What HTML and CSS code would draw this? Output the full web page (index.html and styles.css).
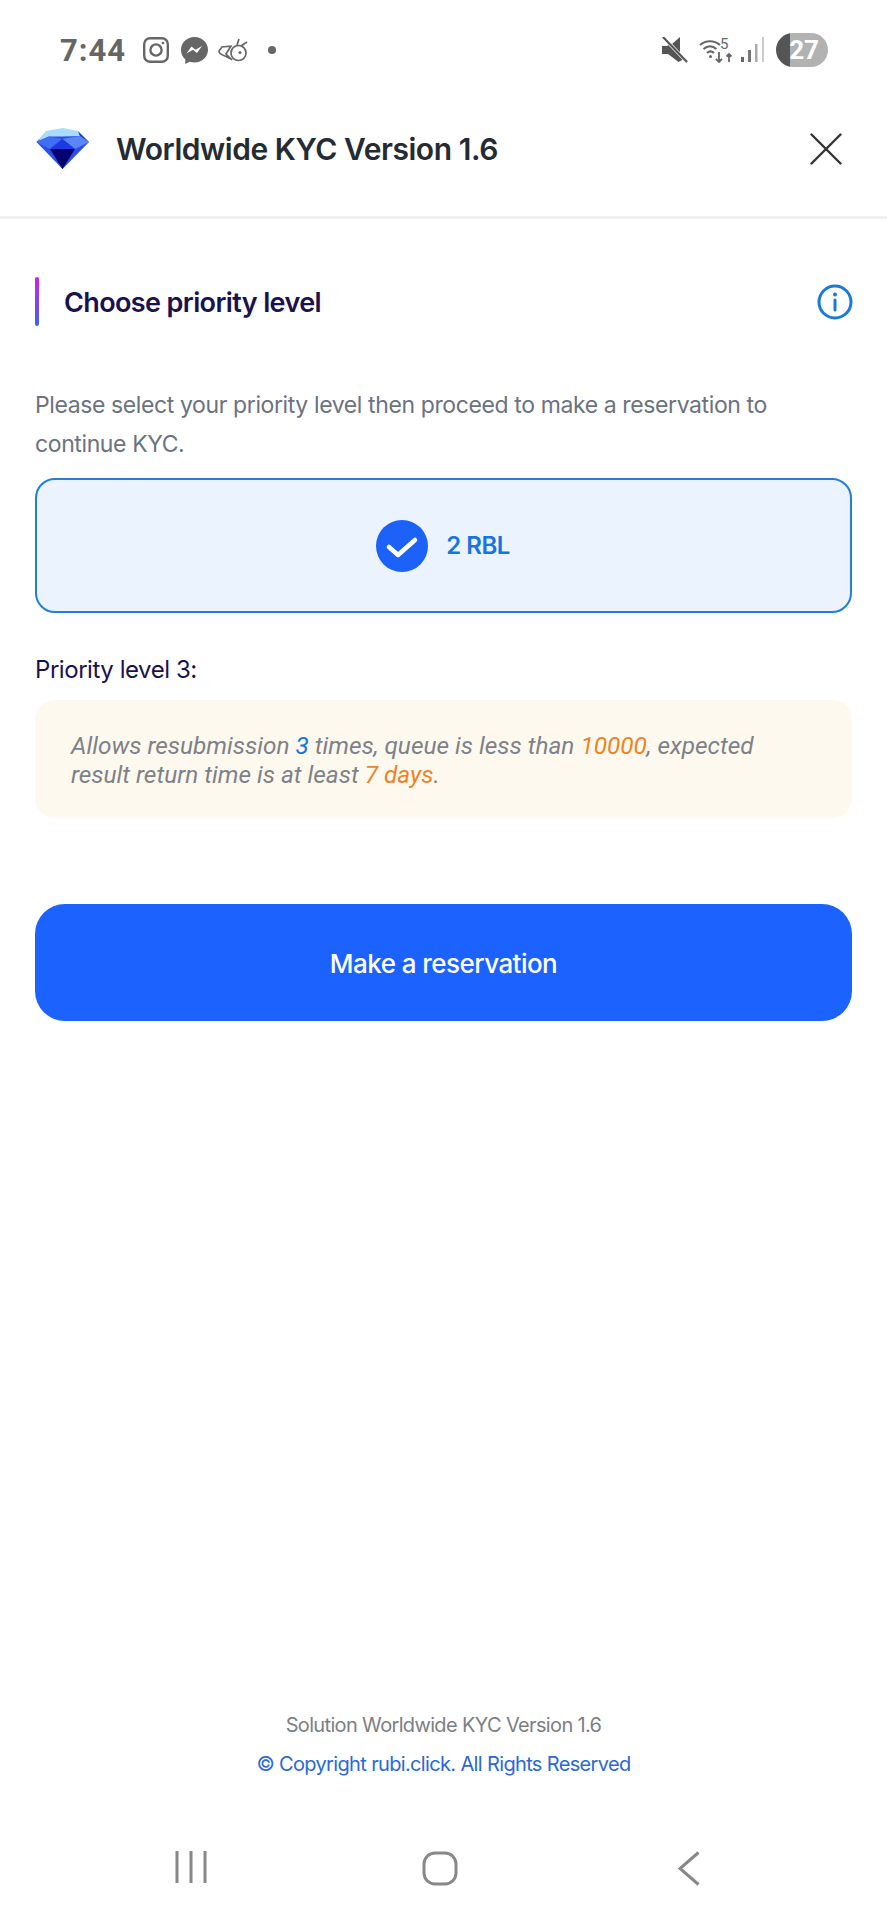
FILE: index.html
```html
<!DOCTYPE html>
<html>
<head lang="en">
    <meta charset="UTF-8">
    <title>Worldwide KYC Version 1.6</title>
    <link rel="stylesheet" href="styles.css">
</head>
<body>
<div class="page">
    <div class="status">
        <span class="time">7:44</span>
        <svg class="ic-insta" width="26" height="26" viewBox="0 0 26 26" fill="none" stroke="#666" stroke-width="2.4">
            <rect x="1.2" y="1.2" width="23.6" height="23.6" rx="6"/>
            <circle cx="13" cy="13" r="5.6"/>
            <circle cx="20" cy="6" r="1.3" fill="#666" stroke="none"/>
        </svg>
        <svg class="ic-msg" width="27" height="27" viewBox="0 0 27 27">
            <path d="M13.5 0C6 0 0 5.6 0 12.9c0 3.900 1.600 7.200 4.300 9.500V27l4.200-2.300c1.600.5 3.200.7 5 .7C21 25.400 27 19.900 27 12.700 27 5.600 21 0 13.500 0z" fill="#666"/>
            <path d="M5.500 16.500l5-7 4 3.300 6.500-3.800-5 7-4-3.300z" fill="#fff"/>
        </svg>
        <svg class="ic-bee" width="30" height="24" viewBox="0 0 30 24" fill="none" stroke="#666" stroke-width="1.700">
            <circle cx="20.500" cy="15" r="7.500"/>
            <circle cx="22" cy="14.500" r="1.500" fill="#666" stroke="none"/>
            <path d="M14 8L4 9 1 13c0 2 3 4 6 5M7 18l7 3.500M13 8l-5 8 6 6M19 7l2-6M23 8l6-4"/>
        </svg>
        <span class="dot"></span>
        <span class="status-gap"></span>
        <svg class="ic-mute" width="26" height="26" viewBox="0 0 26 26">
            <path d="M0 9h5l4-3 14 15.500L16.500 25 6 17H0z" fill="#555"/>
            <path d="M10 7l8-7v17z" fill="#555"/>
            <path d="M2 1l23 24" stroke="#fff" stroke-width="3.500"/>
            <path d="M1 0l24 25" stroke="#555" stroke-width="2.200"/>
        </svg>
        <svg class="ic-wifi" width="34" height="28" viewBox="0 0 34 28" fill="none" stroke="#666" stroke-width="2.200">
            <path d="M1 9c6-5 14-5 20 0M4.500 13c4-3.500 9-3.500 13 0M8 17c2.200-2 4.800-2 7 0"/>
            <circle cx="11.500" cy="20.500" r="1.500" fill="#666" stroke="none"/>
            <path d="M20 16v10M17 23l3 3 3-3M30 26v-8M27.500 20.500l2.500-2.500 2.500 2.500" stroke-width="1.800"/>
            <text class="wifi-num" x="21" y="13">5</text>
        </svg>
        <svg class="ic-signal" width="24" height="26" viewBox="0 0 24 26">
            <rect x="0" y="20" width="3" height="5" fill="#666"/>
            <rect x="7" y="13" width="3" height="12" fill="#777"/>
            <rect x="14" y="7" width="2.500" height="18" fill="#aaa"/>
            <rect x="21" y="0" width="2" height="25" fill="#ccc"/>
        </svg>
        <span class="battery">27</span>
    </div>

    <div class="header">
        <svg class="logo" width="54" height="44" viewBox="0 0 54 44">
            <polygon points="0.500,15 10,5 42,5 53,15 26.500,42" fill="#2b4fe0"/>
            <polygon points="2,14 10,4 27,1 42,4 44,9 26,9.500 13,9.500" fill="#a9dcfb"/>
            <polygon points="42,4 53,15 44,9" fill="#1f3fc9"/>
            <polygon points="0.500,15 13,9.500 26,12 14,22" fill="#3f6ff2"/>
            <polygon points="26,12 44,9 53,15 39,22" fill="#5b86f8"/>
            <polygon points="14,22 26.500,12 39,22" fill="#1c3ae0"/>
            <polygon points="14,22 39,22 26.500,42" fill="#03036f"/>
        </svg>
        <span class="header-title">Worldwide KYC Version 1.6</span>
        <svg class="close" width="32" height="32" viewBox="0 0 32 32" stroke="#333" stroke-width="2.400" stroke-linecap="round">
            <path d="M1.500 1.500l29 29M30.500 1.500l-29 29"/>
        </svg>
    </div>

    <div class="main">
        <div class="section-head">
            <span class="accent"></span>
            <span class="section-title">Choose priority level</span>
            <svg class="info" width="36" height="36" viewBox="0 0 36 36" fill="none" stroke="#1a7ad9" stroke-width="3">
                <circle cx="18" cy="18" r="16"/>
                <path d="M18 16v10" stroke-linecap="round"/>
                <circle cx="18" cy="10.500" r="2" fill="#1a7ad9" stroke="none"/>
            </svg>
        </div>
        <p class="intro">Please select your priority level then proceed to make a reservation to continue KYC.</p>
        <div class="option">
            <svg width="52" height="52" viewBox="0 0 52 52">
                <circle cx="26" cy="26" r="26" fill="#1c62f8"/>
                <path d="M13 27l9 8 17-15" fill="none" stroke="#fff" stroke-width="4.500" stroke-linecap="round" stroke-linejoin="round"/>
            </svg>
            <span class="option-text">2 RBL</span>
        </div>
        <div class="level-label">Priority level 3:</div>
        <div class="note">
            Allows resubmission <span class="hl-blue">3</span> times, queue is less than <span class="hl-orange">10000</span>, expected<br>
            result return time is at least <span class="hl-orange">7 days</span>.
        </div>
        <button class="reserve">Make a reservation</button>
    </div>

    <div class="footer">
        <div class="footer-line">Solution Worldwide KYC Version 1.6</div>
        <div class="footer-copy">© Copyright rubi.click. All Rights Reserved</div>
    </div>

    <div class="navbar">
        <svg width="32" height="32" viewBox="0 0 32 32" stroke="#888" stroke-width="3">
            <path d="M2 0v32M16 0v32M30 0v32"/>
        </svg>
        <svg class="nav-home" width="36" height="35" viewBox="0 0 36 35" fill="none" stroke="#888" stroke-width="3">
            <rect x="2" y="2" width="32" height="31" rx="11"/>
        </svg>
        <svg class="nav-back" width="22" height="35" viewBox="0 0 22 35" fill="none" stroke="#888" stroke-width="3">
            <path d="M20.500 1.500L2 17.500l18.500 16"/>
        </svg>
    </div>
</div>
</body>
</html>
```

FILE: styles.css
```css
* {
    margin: 0;
    padding: 0;
    box-sizing: border-box;
}

body {
    background: #fff;
    font-family: Inter, "Liberation Sans", sans-serif;
}

.page {
    width: 887px;
    height: 1920px;
    display: flex;
    flex-direction: column;
}

/* status bar */
.status {
    height: 100px;
    flex: none;
    display: flex;
    align-items: center;
    padding: 0 59px 0 60px;
}

.time {
    font-family: Roboto, sans-serif;
    font-size: 31px;
    font-weight: 700;
    color: #666;
    letter-spacing: 1px;
    width: 83px;
}

.ic-msg {
    margin-left: 12px;
}

.ic-bee {
    margin-left: 10px;
}

.dot {
    width: 8px;
    height: 8px;
    border-radius: 50%;
    background: #666;
    margin-left: 20px;
}

.status-gap {
    flex: 1;
}

.ic-wifi {
    margin-left: 11px;
}

.wifi-num {
    font-family: Roboto, sans-serif;
    font-size: 15px;
    fill: #666;
    stroke: none;
}

.ic-signal {
    margin-left: 8px;
}

.battery {
    width: 52px;
    height: 34px;
    margin-left: 11px;
    border-radius: 17px;
    background: linear-gradient(90deg, #555 14px, #b2b2b2 14px);
    color: #fff;
    font-family: Roboto, sans-serif;
    font-size: 26px;
    font-weight: 700;
    line-height: 34px;
    text-align: right;
    padding-right: 9px;
}

/* title bar */
.header {
    height: 119px;
    flex: none;
    display: flex;
    align-items: center;
    padding: 0 45px 19px 36px;
    border-bottom: 3px solid #f0f0f0;
}

.header-title {
    margin-left: 26px;
    flex: 1;
    font-size: 30px;
    font-weight: 600;
    letter-spacing: -0.45px;
    color: #242b33;
}

.main {
    flex: 1;
    padding: 0 35px;
}

.section-head {
    height: 49px;
    margin-top: 58px;
    display: flex;
    align-items: center;
}

.accent {
    width: 4px;
    height: 49px;
    border-radius: 2px;
    background: linear-gradient(180deg, #d61fe6, #3f63ea);
}

.section-title {
    margin-left: 25px;
    flex: 1;
    padding-top: 1px;
    font-size: 27px;
    font-weight: 600;
    letter-spacing: -0.62px;
    color: #1a1150;
}

.info {
    margin-right: -1px;
}

.intro {
    margin-top: 60px;
    font-size: 23px;
    letter-spacing: -0.39px;
    line-height: 39px;
    color: #6b7280;
}

.option {
    height: 135px;
    margin-top: 14px;
    padding-right: 1px;
    display: flex;
    align-items: center;
    justify-content: center;
    gap: 18px;
    background: #ebf3fe;
    border: 2px solid #1f7fd9;
    border-radius: 20px;
}

.option-text {
    font-size: 24px;
    font-weight: 600;
    letter-spacing: -0.5px;
    color: #1a73e0;
}

.level-label {
    margin-top: 42px;
    font-size: 24px;
    letter-spacing: -0.45px;
    line-height: 30px;
    color: #1a1150;
}

.note {
    height: 118px;
    margin-top: 15px;
    padding: 31px 36px 0;
    background: #fef9ee;
    border-radius: 20px;
    font-family: Roboto, sans-serif;
    font-size: 24.4px;
    font-style: italic;
    line-height: 29px;
    color: #7d8289;
}

.hl-blue {
    color: #1a73d9;
}

.hl-orange {
    color: #ee8326;
}

.reserve {
    display: block;
    width: 100%;
    height: 117px;
    margin-top: 86px;
    padding-top: 2px;
    border: none;
    border-radius: 30px;
    background: #1c62ff;
    color: #fff;
    font-family: Inter, sans-serif;
    font-size: 26px;
    font-weight: 500;
    letter-spacing: -0.55px;
}

.footer {
    flex: none;
    text-align: center;
    font-size: 20px;
    letter-spacing: -0.65px;
}

.footer-line {
    line-height: 30px;
    color: #7b7f85;
}

.footer-copy {
    margin-top: 9px;
    line-height: 30px;
    color: #2a68d8;
}

.navbar {
    height: 141px;
    flex: none;
    display: flex;
    align-items: flex-start;
    padding: 72px 0 0 175px;
}

.nav-home {
    margin-left: 215px;
}

.nav-back {
    margin-left: 220px;
}
```
